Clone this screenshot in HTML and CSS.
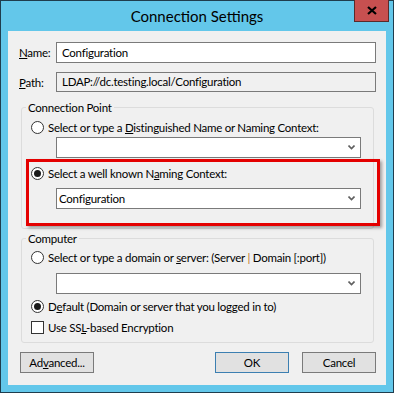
FILE: index.html
```html
<!DOCTYPE html>
<html lang="en">
<head>
  <meta charset="UTF-8" />
  <title>Connection Settings</title>
  <link rel="stylesheet" href="styles.css">
</head>
<body>
  <div class="window">
    <div class="titlebar">
      <span class="title">Connection Settings</span>
      <span class="close-btn">
        <svg width="10" height="9" viewBox="0 0 10 9"><path d="M1 1 L9 8 M9 1 L1 8" stroke="#000" stroke-width="2.2" fill="none"/></svg>
      </span>
    </div>

    <div class="client">
      <!-- Name / Path -->
      <div class="field-row">
        <span class="field-label"><u>N</u>ame:</span>
        <div class="textbox">Configuration</div>
      </div>
      <div class="field-row path-row">
        <span class="field-label"><u>P</u>ath:</span>
        <div class="textbox readonly">LDAP://dc.testing.local/Configuration</div>
      </div>

      <!-- Connection Point -->
      <fieldset class="group group-point">
        <legend>Connection Point</legend>
        <div class="option"><span class="radio"></span><span>Select or type a <u>D</u>istinguished Name or Naming Context:</span></div>
        <div class="combo">
          <span class="combo-text"></span>
          <svg class="chevron" width="7" height="5" viewBox="0 0 7 5"><path d="M0.5 0.5 L3.5 3.5 L6.5 0.5" stroke="#606060" stroke-width="1.6" fill="none"/></svg>
        </div>
        <div class="highlight">
          <div class="option"><span class="radio checked"></span><span>Select a well known N<u>a</u>ming Context:</span></div>
          <div class="combo">
            <span class="combo-text">Configuration</span>
            <svg class="chevron" width="7" height="5" viewBox="0 0 7 5"><path d="M0.5 0.5 L3.5 3.5 L6.5 0.5" stroke="#606060" stroke-width="1.6" fill="none"/></svg>
          </div>
        </div>
      </fieldset>

      <!-- Computer -->
      <fieldset class="group group-computer">
        <legend>Computer</legend>
        <div class="option"><span class="radio"></span><span>Select or type a domain or <u>s</u>erver: (Server <span class="pipe">|</span> Domain [:port])</span></div>
        <div class="combo combo-server">
          <span class="combo-text"></span>
          <svg class="chevron" width="7" height="5" viewBox="0 0 7 5"><path d="M0.5 0.5 L3.5 3.5 L6.5 0.5" stroke="#606060" stroke-width="1.6" fill="none"/></svg>
        </div>
        <div class="option option-default"><span class="radio checked"></span><span>D<u>e</u>fault (Domain or server that you logged in to)</span></div>
        <div class="option option-ssl"><span class="checkbox"></span><span>Use SS<u>L</u>-based Encryption</span></div>
      </fieldset>

      <!-- Buttons -->
      <div class="buttons">
        <button class="btn">Ad<u>v</u>anced...</button>
        <button class="btn btn-default">OK</button>
        <button class="btn">Cancel</button>
      </div>
    </div>
  </div>
</body>
</html>
```

FILE: styles.css
```css
body {
  margin: 0;
  padding: 0;
  background: #fff;
  font-family: "Lato", "Noto Sans", sans-serif;
  font-size: 11.5px;
  letter-spacing: -0.25px;
  color: #000;
}

.window {
  width: 394px;
  height: 393px;
  box-sizing: border-box;
  border: 1px solid #1f3d4d;
  background: #63c7ea;
  display: flex;
  flex-direction: column;
}

.titlebar {
  position: relative;
  height: 30px;
  display: flex;
  align-items: center;
  justify-content: center;
}

.title {
  font-size: 15px;
  letter-spacing: 0;
  margin-top: -1px;
}

.close-btn {
  position: absolute;
  top: -1px;
  right: 4px;
  width: 33px;
  height: 21px;
  background: #c75050;
  border: 1px solid #5a2a2a;
  border-top: none;
  display: flex;
  align-items: center;
  justify-content: center;
}

.client {
  margin: 0 7px;
  height: 354px;
  box-sizing: border-box;
  background: #f0f0f0;
  padding: 11px 0 0 0;
}

/* name / path rows */
.field-row {
  display: flex;
  align-items: center;
  padding: 0 10px 0 11px;
}

.path-row {
  margin-top: 9px;
}

.field-label {
  width: 37px;
  flex-shrink: 0;
}

.textbox {
  flex: 1;
  height: 21px;
  box-sizing: border-box;
  border: 1px solid #7a7a7a;
  background: #fff;
  padding: 0 5px;
  line-height: 19px;
}

.textbox.readonly {
  height: 20px;
  line-height: 18px;
  background: #f0f0f0;
}

/* group boxes */
.group {
  margin: 8px 12px 0 13px;
  padding: 0 0 2px 0;
  border: 1px solid #dcdcdc;
  border-radius: 3px;
}

.group legend {
  margin-left: 4px;
  padding: 0 2px;
  line-height: 15px;
}

.group-computer {
  margin-top: 2px;
  padding-bottom: 7px;
}

.option {
  display: flex;
  align-items: center;
  height: 15px;
  padding-left: 9px;
  white-space: nowrap;
}

.group-point > .option {
  margin-top: 5px;
}

.group-computer > .option {
  margin-top: 4px;
}

.group-computer > .option-default {
  margin-top: 5px;
}

.group-computer > .option-ssl {
  margin-top: 6px;
}

.radio {
  width: 13px;
  height: 13px;
  box-sizing: border-box;
  border: 1px solid #333;
  border-radius: 50%;
  background: #fff;
  margin-right: 4px;
  display: flex;
  align-items: center;
  justify-content: center;
}

.radio.checked::after {
  content: "";
  width: 7px;
  height: 7px;
  border-radius: 50%;
  background: #1a1a1a;
}

.checkbox {
  width: 13px;
  height: 13px;
  box-sizing: border-box;
  border: 1px solid #333;
  background: #fff;
  margin-right: 4px;
}

.pipe {
  color: #c07020;
}

.combo {
  height: 21px;
  box-sizing: border-box;
  border: 1px solid #7a7a7a;
  background: #fff;
  margin: 2px 12px 0 34px;
  display: flex;
  align-items: center;
  padding: 0 5px 0 2px;
}

.combo-server {
  margin-top: 8px;
}

.combo-text {
  flex: 1;
}

/* red annotation box */
.highlight {
  margin: 1px -7px 0 4px;
  border: 3px solid #e40000;
  box-shadow: 2px 2px 3px rgba(0, 0, 0, 0.35);
  padding: 4px 0 14px 0;
}

.highlight .option {
  padding-left: 2px;
}

.highlight .combo {
  margin: 7px 16px 0 27px;
}

/* buttons */
.buttons {
  display: flex;
  margin-top: 9px;
  padding: 0 10px 0 12px;
  gap: 13px;
}

.btn {
  width: 74px;
  height: 21px;
  padding: 0;
  font-family: inherit;
  font-size: 11.5px;
  letter-spacing: -0.25px;
  color: #000;
  background: #e1e1e1;
  border: 1px solid #7a7a7a;
}

.btn-default {
  margin-left: auto;
  border-color: #3c7fb1;
}
```
